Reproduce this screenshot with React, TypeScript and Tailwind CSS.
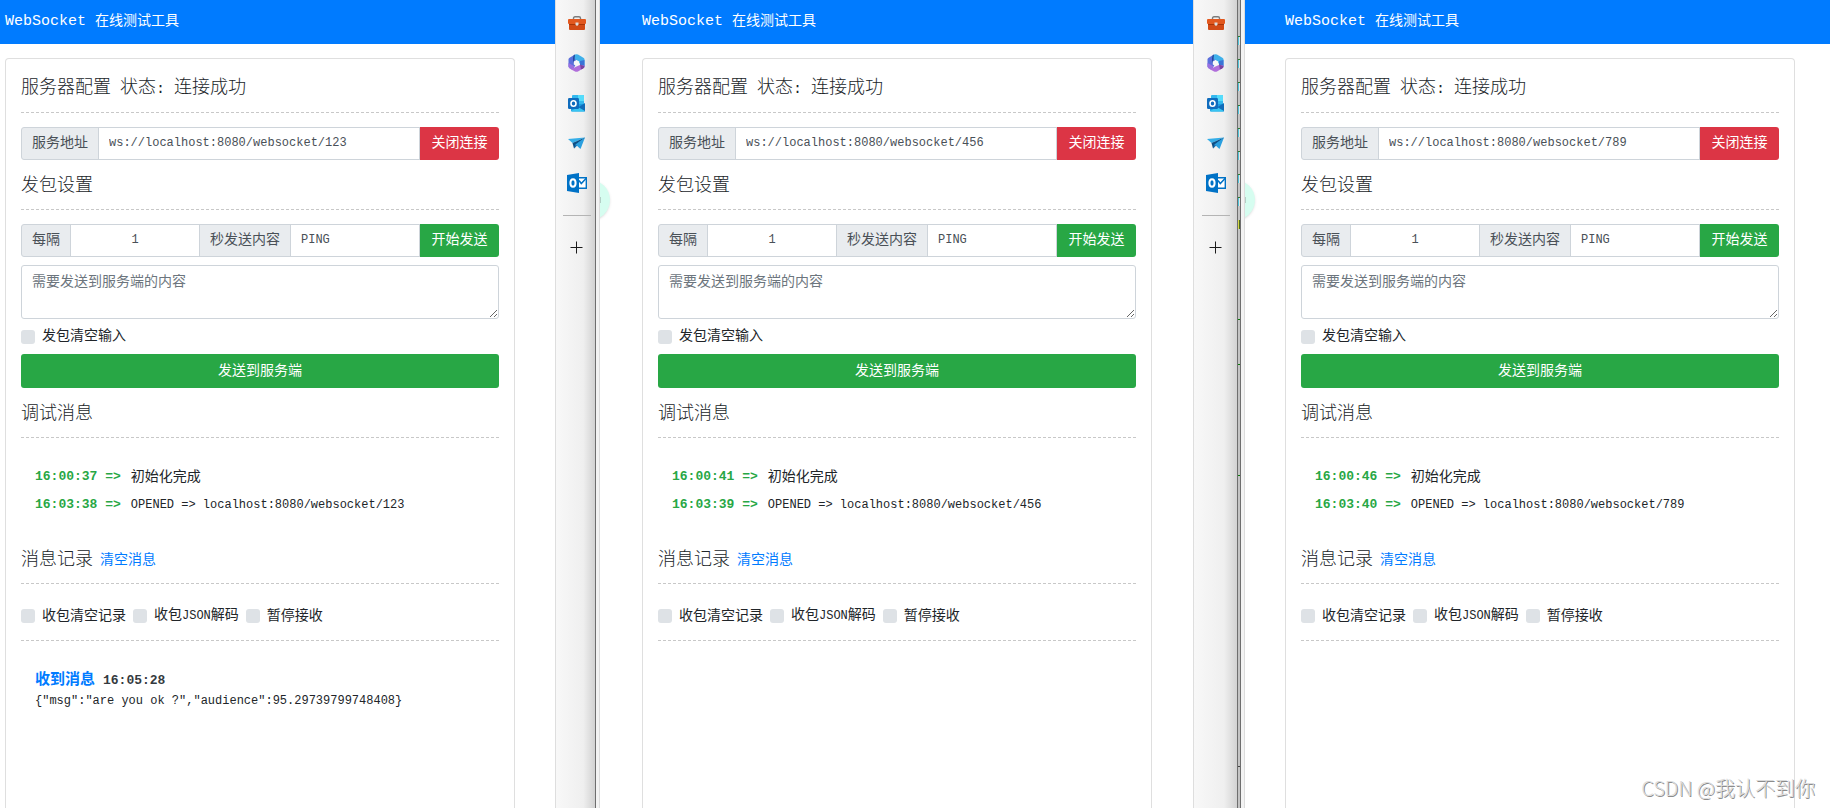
import type { ReactNode } from "react";
import clsx from "clsx";

interface LogItem {
  time: string;
  text: string;
  mono?: boolean;
}

interface ReceivedItem {
  time: string;
  body: string;
}

interface ClientWindow {
  id: string;
  url: string;
  logs: LogItem[];
  received: ReceivedItem[];
}

const clients: ClientWindow[] = [
  {
    id: "123",
    url: "ws://localhost:8080/websocket/123",
    logs: [
      { time: "16:00:37", text: "初始化完成" },
      { time: "16:03:38", text: "OPENED => localhost:8080/websocket/123", mono: true },
    ],
    received: [
      { time: "16:05:28", body: '{"msg":"are you ok ?","audience":95.29739799748408}' },
    ],
  },
  {
    id: "456",
    url: "ws://localhost:8080/websocket/456",
    logs: [
      { time: "16:00:41", text: "初始化完成" },
      { time: "16:03:39", text: "OPENED => localhost:8080/websocket/456", mono: true },
    ],
    received: [],
  },
  {
    id: "789",
    url: "ws://localhost:8080/websocket/789",
    logs: [
      { time: "16:00:46", text: "初始化完成" },
      { time: "16:03:40", text: "OPENED => localhost:8080/websocket/789", mono: true },
    ],
    received: [],
  },
];

const addonClass =
  "flex shrink-0 items-center border border-[#ced4da] bg-[#e9ecef] px-[10px] text-[#495057]";
const inputClass =
  "-ml-px min-w-0 flex-1 border border-[#ced4da] bg-white px-[10px] text-[12px] text-[#495057] outline-none";
const buttonClass = "w-[79px] shrink-0 rounded-r-[3px] text-white";

function SectionTitle({ children }: { children: ReactNode }) {
  return (
    <div className="mb-[14px] flex items-center border-b border-dashed border-[#c8c8c8] pt-px pb-[9px] text-[18px] leading-[27px]">
      {children}
    </div>
  );
}

function Check({ id, children }: { id: string; children: ReactNode }) {
  return (
    <div className="flex items-center gap-[7px]">
      <input
        id={id}
        type="checkbox"
        className="size-[14px] appearance-none rounded-[3px] bg-[#dee2e6] checked:bg-[#007bff]"
      />
      <label htmlFor={id}>{children}</label>
    </div>
  );
}

function ToolboxIcon() {
  return (
    <svg width="18" height="14" viewBox="0 0 18 14">
      <path d="M5.5 3.5V2.2Q5.5.8 7 .8h4q1.5 0 1.5 1.4v1.3" fill="none" stroke="#7c7c7c" strokeWidth="1.4" />
      <rect x="1" y="7" width="16" height="7" rx="1" fill="#d24a16" />
      <rect x="0" y="3" width="18" height="5" rx="1" fill="#e2581f" />
      <path d="M1 8h16v1H1z" fill="#a93508" />
      <path d="M7.5 6.4h3v2.4L9 10 7.5 8.8z" fill="#dedede" />
    </svg>
  );
}

function Microsoft365Icon() {
  return (
    <svg width="17" height="18" viewBox="0 0 17 18">
      <path d="M7 .6 1.6 3.7Q.5 4.4.5 5.6v7.2l4.600 2.400L8.500 9z" fill="#5b6fdc" />
      <path d="M.5 9v3.600q0 1.200 1.100 1.800l3.500 1.800 1-4.200z" fill="#9a6fe0" />
      <path d="M7 .6q1.500-.8 3 0l5.400 3.100q1.100.7 1.100 1.900v7L11 9 5 3z" fill="#3fb0ea" />
      <path d="M16.5 6v6.500L12 11V7z" fill="#3b73d6" />
      <path d="m16.500 11.500-4.500-.5-3.500 1.500-5.500 2.700L7 17.400q1.500.8 3 0l5.400-3.100q1.100-.6 1.100-1.800z" fill="#b06edb" />
      <path d="m12 10.500 4.500 1.700q0 1.400-1.100 2.100L13 15.600z" fill="#7a449f" />
      <path d="M5.500 1.500 7 .6l-.5 5L5.200 9.500 5 4z" fill="#214a9f" />
      <path d="m8.500 5.900 2.700 1.600v3l-2.700 1.600-2.700-1.600v-3z" fill="#f7f7f7" />
    </svg>
  );
}

function OutlookIcon() {
  return (
    <svg width="17" height="17" viewBox="0 0 17 17">
      <rect x="4" y="0" width="12" height="11" rx="1" fill="#33b8ee" />
      <path d="M10 0h5q1 0 1 1v5h-6z" fill="#55dcfb" />
      <path d="M4 3h6v6H4z" fill="#1279c8" />
      <path d="M3 9h14v6.5q0 1-1 1H4q-1 0-1-1z" fill="#1b9be2" />
      <path d="m17 8-7 4.500 7 4z" fill="#126cb8" />
      <path d="m3 16 7-4 7 4-1 .5H4z" fill="#39c5f2" />
      <rect x="0" y="3" width="11" height="11" rx="1.2" fill="#0f6cbd" />
      <ellipse cx="5.5" cy="8.5" rx="2.5" ry="2.7" fill="none" stroke="#fff" strokeWidth="1.6" />
    </svg>
  );
}

function PlaneIcon() {
  return (
    <svg width="17" height="13" viewBox="0 0 17 13">
      <path d="M17 .5 0 2l4.500 4z" fill="#35aee8" />
      <path d="M17 .5 4.500 6 6 11.500z" fill="#0d4f86" />
      <path d="m17 .5-9.500 7L6 11.500z" fill="#1a76b8" />
      <path d="m17 .5-9.500 7L12.500 12z" fill="#2a9fdf" />
    </svg>
  );
}

function OutlookClassicIcon() {
  return (
    <svg width="20" height="20" viewBox="0 0 20 20">
      <path d="M11 4.700h8.300v10.600H11z" fill="#fff" stroke="#0072c6" strokeWidth="1.4" />
      <path d="m12 7.500 2.300 3L19.500 5" fill="none" stroke="#0072c6" strokeWidth="1.5" />
      <path d="M0 2 12 0v20L0 18z" fill="#0072c6" />
      <ellipse cx="6" cy="10" rx="2.6" ry="3.7" fill="none" stroke="#fff" strokeWidth="2" />
    </svg>
  );
}

const shortcuts = [
  { label: "工具", icon: <ToolboxIcon /> },
  { label: "Microsoft 365", icon: <Microsoft365Icon /> },
  { label: "Outlook", icon: <OutlookIcon /> },
  { label: "Drop", icon: <PlaneIcon /> },
  { label: "Outlook Classic", icon: <OutlookClassicIcon /> },
];

// slice of the editor visible between two browser windows
function EditorSliver() {
  return (
    <svg width="2" height="808" className="shrink-0 bg-[#c4c4c4]">
      {[36, 59, 82, 105, 128, 151, 174, 197].map((y) => (
        <g key={y}>
          <rect x="0" y={y} width="1" height="9" fill="#4fc3d9" />
          <rect x="1" y={y} width="1" height="9" fill="#e4e4e4" />
          <rect x="0" y={y} width="2" height="1" fill="#2f7d32" />
        </g>
      ))}
      <rect x="0" y="220" width="1" height="9" fill="#d8d64a" />
      <rect x="1" y="220" width="1" height="9" fill="#4c6b1e" />
      <rect x="0" y="319" width="2" height="1" fill="#0a7a0a" />
      <rect x="0" y="364" width="2" height="1" fill="#0a7a0a" />
      <rect x="0" y="475" width="2" height="1" fill="#0a7a0a" />
      <rect x="0" y="766" width="2" height="1" fill="#444" />
    </svg>
  );
}

function EdgeSidebar({ wide }: { wide?: boolean }) {
  return (
    <aside className={clsx("flex shrink-0", wide ? "w-[52px]" : "w-[45px]")}>
      <div
        className={clsx(
          "flex flex-1 flex-col items-center border-l border-[#dedede] bg-linear-to-r from-[#f8f8f8] via-[#efefef] via-70% to-[#d2d2d2] pt-[3px]",
          !wide && "pl-[2px]"
        )}
      >
        {shortcuts.map((item) => (
          <button
            key={item.label}
            type="button"
            aria-label={item.label}
            className="flex h-10 w-7 items-center justify-center"
          >
            {item.icon}
          </button>
        ))}
        <div className="mt-3 h-px w-7 bg-[#b4b4b4]" />
        <button type="button" aria-label="添加" className="mt-[25px] pr-px">
          <svg width="13" height="13" viewBox="0 0 13 13">
            <path d="M6.5.5v12M.5 6.5h12" stroke="#1b1b1b" strokeWidth="1" />
          </svg>
        </button>
      </div>
      <div className="w-px bg-[#6e6e6e]" />
      {wide && (
        <>
          <EditorSliver />
          <div className="w-px bg-[#6e6e6e]" />
        </>
      )}
      <div className="w-1 border-r border-[#dcdcdc] bg-[#f3f3f3]" />
    </aside>
  );
}

function TestPanel({ client }: { client: ClientWindow }) {
  const { id, url, logs, received } = client;

  return (
    <div className="flex w-full max-w-[510px] flex-1 flex-col rounded-t-[4px] border border-b-0 border-[#dfdfdf] px-[15px] pt-[15px]">
      <SectionTitle>
        <h2 className="flex gap-[9px] font-light">
          <span>服务器配置</span>
          <span>
            状态<span className="text-[15px]">:</span>
          </span>
          <span>连接成功</span>
        </h2>
      </SectionTitle>
      <div className="flex h-[33px]">
        <label htmlFor={`url-${id}`} className={clsx(addonClass, "rounded-l-[3px]")}>
          服务地址
        </label>
        <input id={`url-${id}`} type="text" defaultValue={url} className={inputClass} />
        <button type="button" className={clsx(buttonClass, "bg-[#dc3545]")}>
          关闭连接
        </button>
      </div>

      <div className="mt-3">
        <SectionTitle>
          <h2 className="font-light">发包设置</h2>
        </SectionTitle>
      </div>
      <div className="flex h-[33px]">
        <label htmlFor={`interval-${id}`} className={clsx(addonClass, "rounded-l-[3px]")}>
          每隔
        </label>
        <input
          id={`interval-${id}`}
          type="text"
          defaultValue="1"
          className={clsx(inputClass, "text-center")}
        />
        <label htmlFor={`content-${id}`} className={clsx(addonClass, "-ml-px")}>
          秒发送内容
        </label>
        <input id={`content-${id}`} type="text" defaultValue="PING" className={inputClass} />
        <button type="button" className={clsx(buttonClass, "bg-[#28a745]")}>
          开始发送
        </button>
      </div>

      <textarea
        aria-label="需要发送到服务端的内容"
        placeholder="需要发送到服务端的内容"
        className="mt-2 block h-[54px] w-full shrink-0 resize-y rounded-[3px] border border-[#ced4da] bg-white px-[10px] py-[6px] text-[#495057] outline-none placeholder:text-[#6c757d]"
      />
      <div className="flex h-[35px] items-center">
        <Check id={`clear-input-${id}`}>发包清空输入</Check>
      </div>
      <button type="button" className="h-[34px] w-full shrink-0 rounded-[3px] bg-[#28a745] text-white">
        发送到服务端
      </button>

      <div className="mt-3">
        <SectionTitle>
          <h2 className="font-light">调试消息</h2>
        </SectionTitle>
      </div>
      <ul className="px-[14px] pt-[11px] pb-[15px] leading-7">
        {logs.map((log) => (
          <li key={log.time} className="flex gap-[10px]">
            <b className="text-[13px] text-[#28a745]">{log.time} =&gt;</b>
            <span className={clsx(log.mono && "text-[12px]")}>{log.text}</span>
          </li>
        ))}
      </ul>

      <div className="mt-3">
        <SectionTitle>
          <h2 className="font-light">消息记录</h2>
          <a href="#clear" className="ml-[7px] text-[14px] text-[#007bff]">
            清空消息
          </a>
        </SectionTitle>
      </div>
      <div className="flex gap-[7px] border-b border-dashed border-[#c8c8c8] pt-[7px] pb-[13px]">
        <Check id={`clear-log-${id}`}>收包清空记录</Check>
        <Check id={`json-${id}`}>
          收包<span className="text-[12px]">JSON</span>解码
        </Check>
        <Check id={`pause-${id}`}>暂停接收</Check>
      </div>

      <ul className="px-[14px] pt-[29px] leading-[21px]">
        {received.map((msg) => (
          <li key={msg.time}>
            <div className="flex gap-2 font-bold">
              <span className="text-[15px] text-[#007bff]">收到消息</span>
              <time className="text-[13px] text-[#343a40]">{msg.time}</time>
            </div>
            <p className="text-[12px]">{msg.body}</p>
          </li>
        ))}
      </ul>
    </div>
  );
}

export default function App() {
  return (
    <div className="relative grid h-screen grid-cols-[600fr_645fr_585fr] overflow-hidden bg-white font-['Liberation_Mono','Noto_Sans_CJK_SC',monospace] text-[14px] leading-[21px] text-[#212529]">
      {clients.map((client, i) => (
        <section key={client.id} className="flex min-w-0 overflow-hidden">
          <main className="relative flex min-w-0 flex-1 flex-col">
            <header
              className={clsx(
                "flex h-11 shrink-0 items-center gap-[9px] bg-[#007bff] pb-[2px] text-white",
                i === 0 && "pl-[5px]",
                i === 1 && "pl-[42px]",
                i === 2 && "pl-10"
              )}
            >
              <h1 className="text-[15px]">WebSocket</h1>
              <span>在线测试工具</span>
            </header>
            <div
              className={clsx(
                "flex flex-1 flex-col pt-[14px]",
                i === 0 && "pl-[5px]",
                i === 1 && "pl-[42px]",
                i === 2 && "pl-10"
              )}
            >
              <TestPanel client={client} />
            </div>
            {i > 0 && (
              <div className="absolute top-[180px] -left-[30px] flex size-10 items-center justify-end rounded-full bg-[#d6fdf0] shadow-sm">
                <span className="mr-[9px] h-[6px] w-[2px] bg-[#b4cfc6]" />
              </div>
            )}
          </main>
          {i < 2 && <EdgeSidebar wide={i === 1} />}
        </section>
      ))}
      <div className="absolute right-[15px] bottom-[5px] font-['Noto_Sans_CJK_SC',sans-serif] text-[20px] leading-[30px] font-light text-[#dcdcdc] [text-shadow:1px_1px_0_#8c8c8c]">
        CSDN @我认不到你
      </div>
    </div>
  );
}
